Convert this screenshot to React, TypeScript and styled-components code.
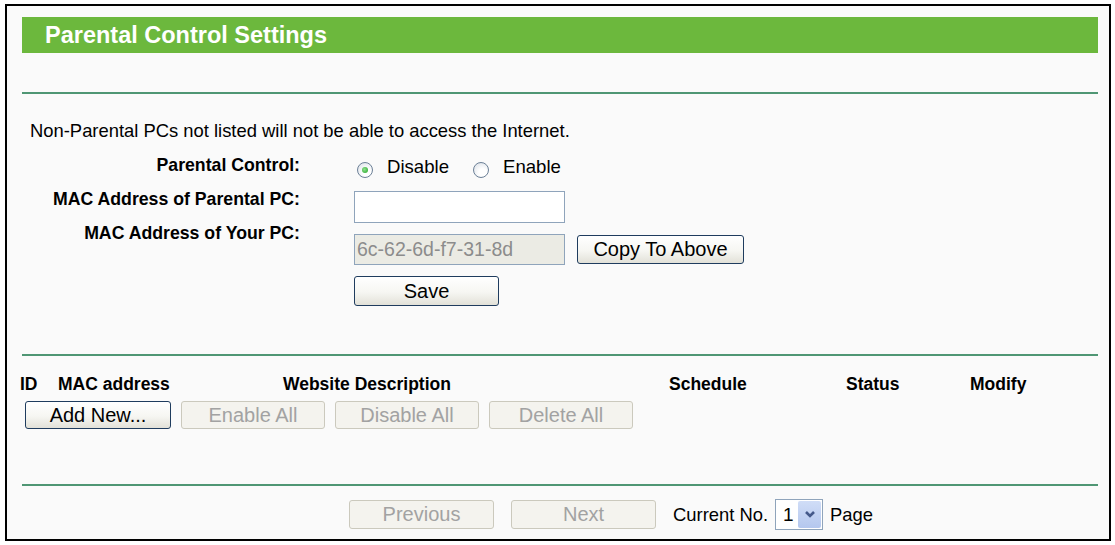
import React from 'react';
import styled, { createGlobalStyle } from 'styled-components';

const GlobalStyle = createGlobalStyle`
  html, body {
    margin: 0;
    padding: 0;
    background: #ffffff;
  }
  body {
    font-family: "Liberation Sans", Arial, sans-serif;
    color: #000;
  }
`;

const Frame = styled.div`
  box-sizing: border-box;
  width: 1106px;
  height: 537px;
  margin: 4px 0 0 5px;
  border: 2px solid #000;
  background: #fafafa;
  padding: 11px 11px 0 15px;
`;

const TitleBar = styled.div`
  height: 36px;
  display: flex;
  align-items: center;
  padding-left: 23px;
  background: #6cb83d;
  color: #fff;
  font-weight: bold;
  font-size: 23.5px;
`;

const Rule = styled.div<{ $top: number }>`
  height: 2px;
  margin-top: ${(p) => p.$top}px;
  background: #4f9674;
`;

const Intro = styled.div`
  margin-top: 26px;
  padding-left: 8px;
  font-size: 18.4px;
  line-height: 21px;
`;

const Form = styled.div`
  display: flex;
  margin-top: 14px;
`;

const LabelColumn = styled.div`
  width: 278px;
  display: flex;
  flex-direction: column;
  align-items: flex-end;
  gap: 13px;
`;

const Label = styled.div`
  font-weight: bold;
  font-size: 17.7px;
  line-height: 21px;
  white-space: nowrap;
`;

const ControlColumn = styled.div`
  margin-left: 54px;
  display: flex;
  flex-direction: column;
  align-items: flex-start;
  gap: 11px;
`;

const RadioRow = styled.div`
  height: 22px;
  margin-top: 1px;
  margin-bottom: 2px;
  display: flex;
  align-items: center;
  font-size: 18.6px;
`;

const Radio = styled.span<{ $checked?: boolean }>`
  position: relative;
  box-sizing: border-box;
  width: 16px;
  height: 16px;
  margin: 5px 14px 0 ${(p) => (p.$checked ? 3 : 2)}px;
  border-radius: 50%;
  border: 1px solid #6c8097;
  background: radial-gradient(circle at 62% 68%, #ffffff 0 30%, #d6dce4 100%);
  &::after {
    content: '';
    display: ${(p) => (p.$checked ? 'block' : 'none')};
    position: absolute;
    left: 4px;
    top: 4px;
    width: 6px;
    height: 6px;
    border-radius: 50%;
    background: radial-gradient(circle at 40% 40%, #8fe08f, #21a321);
  }
`;

const RadioText = styled.span`
  margin-right: 22px;
`;

const TextBox = styled.div<{ $disabled?: boolean }>`
  box-sizing: border-box;
  width: 211px;
  height: ${(p) => (p.$disabled ? 31 : 32)}px;
  border: 1px solid #8fa4bb;
  background: ${(p) => (p.$disabled ? '#ebebe4' : '#fff')};
  color: #8c8c8c;
  font-size: 19.5px;
  display: flex;
  align-items: center;
  padding-left: 2px;
`;

const InlineRow = styled.div`
  display: flex;
  align-items: center;
  gap: 12px;
`;

const Button = styled.div<{ $width: number; $height?: number; $disabled?: boolean }>`
  box-sizing: border-box;
  width: ${(p) => p.$width}px;
  height: ${(p) => p.$height ?? 29}px;
  display: flex;
  align-items: center;
  justify-content: center;
  border-radius: 3px;
  font-size: 20px;
  white-space: nowrap;
  border: 1px solid ${(p) => (p.$disabled ? '#cbc9bd' : '#1f3c5e')};
  color: ${(p) => (p.$disabled ? '#a2a2a2' : '#000')};
  background: ${(p) =>
    p.$disabled
      ? '#f4f3ee'
      : 'linear-gradient(#ffffff 0%, #f6f6f2 55%, #e2e1d8 100%)'};
`;

const TableHead = styled.div`
  display: grid;
  grid-template-columns: 38px 225px 386px 177px 124px auto;
  margin: 18px 0 0 -2px;
  font-weight: bold;
  font-size: 17.5px;
  line-height: 21px;
`;

const ButtonRow = styled.div`
  display: flex;
  gap: 10px;
  margin: 6px 0 0 3px;
`;

const Pager = styled.div`
  display: flex;
  align-items: center;
  gap: 17px;
  margin: 13px 0 0 327px;
  font-size: 18.4px;
`;

const PageNo = styled.div`
  display: flex;
  align-items: center;
  gap: 7px;
`;

const Select = styled.div`
  box-sizing: border-box;
  width: 48px;
  height: 31px;
  border: 1px solid #8fa4bb;
  background: #fff;
  display: flex;
  align-items: stretch;
  padding: 1px;
`;

const SelectValue = styled.span`
  flex: 1;
  display: flex;
  align-items: center;
  padding-left: 6px;
  font-size: 19px;
`;

const SelectArrow = styled.span`
  width: 23px;
  display: flex;
  align-items: center;
  justify-content: center;
  background: linear-gradient(#d0ddf7, #b4c7ee);
  border-radius: 2px;
`;

const Chevron = () => (
  <svg width="12" height="9" viewBox="0 0 12 9">
    <polyline
      points="2,2 6,6 10,2"
      fill="none"
      stroke="#44598a"
      strokeWidth="2.6"
    />
  </svg>
);

const App = () => (
  <>
    <GlobalStyle />
    <Frame>
      <TitleBar>Parental Control Settings</TitleBar>
      <Rule $top={39} />
      <Intro>Non-Parental PCs not listed will not be able to access the Internet.</Intro>
      <Form>
        <LabelColumn>
          <Label>Parental Control:</Label>
          <Label>MAC Address of Parental PC:</Label>
          <Label>MAC Address of Your PC:</Label>
        </LabelColumn>
        <ControlColumn>
          <RadioRow>
            <Radio $checked />
            <RadioText>Disable</RadioText>
            <Radio />
            <RadioText>Enable</RadioText>
          </RadioRow>
          <TextBox />
          <InlineRow>
            <TextBox $disabled>6c-62-6d-f7-31-8d</TextBox>
            <Button $width={167}>Copy To Above</Button>
          </InlineRow>
          <Button $width={145} $height={30}>
            Save
          </Button>
        </ControlColumn>
      </Form>
      <Rule $top={48} />
      <TableHead>
        <span>ID</span>
        <span>MAC address</span>
        <span>Website Description</span>
        <span>Schedule</span>
        <span>Status</span>
        <span>Modify</span>
      </TableHead>
      <ButtonRow>
        <Button $width={146} $height={28}>Add New...</Button>
        <Button $width={144} $height={28} $disabled>Enable All</Button>
        <Button $width={144} $height={28} $disabled>Disable All</Button>
        <Button $width={144} $height={28} $disabled>Delete All</Button>
      </ButtonRow>
      <Rule $top={55} />
      <Pager>
        <Button $width={145} $disabled>Previous</Button>
        <Button $width={145} $disabled>Next</Button>
        <PageNo>
          <span>Current No.</span>
          <Select>
            <SelectValue>1</SelectValue>
            <SelectArrow>
              <Chevron />
            </SelectArrow>
          </Select>
          <span>Page</span>
        </PageNo>
      </Pager>
    </Frame>
  </>
);

export default App;
